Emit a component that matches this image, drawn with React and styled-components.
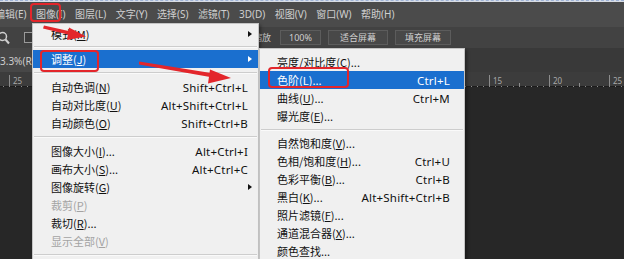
import React from 'react';
import styled, { createGlobalStyle, css } from 'styled-components';

const GlobalStyle = createGlobalStyle`
  html, body {
    margin: 0;
    padding: 0;
    background: #262626;
    overflow: hidden;
  }
`;

const Screen = styled.div`
  position: relative;
  width: 624px;
  height: 259px;
  overflow: hidden;
  display: flex;
  flex-direction: column;
  background: #262626;
  font-family: "Noto Sans", "Noto Sans CJK SC", sans-serif;
`;

const TopEdge = styled.div`
  height: 1px;
  border-top: 1px dashed #9fb3d6;
  background: #d8dde6;
`;

const MenuBar = styled.div`
  height: 25px;
  display: flex;
  align-items: center;
  gap: 9.5px;
  margin-left: -5px;
  background: #4b4b4b;
  color: #cfcfcf;
  font-size: 10px;
  white-space: nowrap;
`;

const BarItem = styled.span`
  position: relative;
  line-height: 25px;

  ${(p) =>
    p.$marked &&
    css`
      &::after {
        content: '';
        position: absolute;
        left: -6px;
        top: 1px;
        width: 27px;
        height: 15px;
        border: 2px solid #e3262b;
        border-radius: 4px;
      }
    `}
`;

const OptionsBar = styled.div`
  height: 21px;
  display: flex;
  align-items: center;
  background: #424242;
  color: #c6c6c6;
  font-size: 9px;
  white-space: nowrap;
`;

const ToolIcons = styled.div`
  display: flex;
  align-items: center;
  gap: 14px;
  margin-left: -2px;
`;

const CheckBox = styled.span`
  width: 7px;
  height: 9px;
  border: 1px solid #9a9a9a;
  background: #3a3a3a;
`;

const OptionGroup = styled.div`
  display: flex;
  align-items: center;
  gap: 7px;
  margin-left: 202px;
`;

const OptionLabel = styled.span`
  margin-right: 2px;
`;

const OptionButton = styled.span`
  height: 13px;
  line-height: 13px;
  padding: 0 ${(p) => p.$pad || 9}px;
  border: 1px solid #5c5c5c;
  background: #484848;
  color: #cfcfcf;
`;

const TabRow = styled.div`
  height: 24px;
  display: flex;
  align-items: stretch;
  background: #393939;
`;

const DocTab = styled.div`
  display: flex;
  align-items: center;
  padding: 2px 10px 0 0;
  background: #474747;
  color: #cdcdcd;
  font-size: 10px;
`;

const RulerStrip = styled.div`
  height: 14px;
  background: #3c3c3c;
  border-bottom: 1px solid #1d1d1d;
`;

const Canvas = styled.div`
  flex: 1;
  background: #272727;
`;

const Menu = styled.div`
  position: absolute;
  left: ${(p) => p.$left}px;
  top: ${(p) => p.$top}px;
  width: ${(p) => p.$width}px;
  padding-top: ${(p) => p.$pad}px;
  background: #f0f0f0;
  border: 1px solid #c4c4c4;
  box-shadow: 2px 2px 3px rgba(0, 0, 0, 0.35);
  box-sizing: border-box;
  color: #111;
  font-size: 11px;
`;

const Item = styled.div`
  height: 18px;
  display: flex;
  align-items: center;
  padding: 0 ${(p) => p.$padRight}px 0 ${(p) => p.$padLeft}px;
  white-space: nowrap;
  color: ${(p) => (p.$disabled ? '#a3a3a3' : p.$active ? '#fff' : '#111')};
  background: ${(p) => (p.$active ? '#1a6fcf' : 'transparent')};
`;

const Label = styled.span`
  position: relative;
  flex: 1;
  font-family: "Noto Sans CJK SC", "Noto Sans", sans-serif;

  ${(p) =>
    p.$box &&
    css`
      flex: none;
      &::after {
        content: '';
        position: absolute;
        left: ${p.$box[0]}px;
        top: ${p.$box[1]}px;
        right: ${p.$box[2]}px;
        bottom: ${p.$box[3]}px;
        border: 2px solid #e3262b;
        border-radius: 4px;
      }
    `}
`;

const Grow = styled.span`
  flex: 1;
`;

const Shortcut = styled.span`
  font-size: 11.5px;
  letter-spacing: 0.2px;
`;

const SubArrow = styled.span`
  width: 0;
  height: 0;
  margin-right: -4px;
  border-left: 4px solid ${(p) => (p.$active ? '#fff' : '#111')};
  border-top: 3.5px solid transparent;
  border-bottom: 3.5px solid transparent;
`;

const Separator = styled.div`
  height: ${(p) => p.$h}px;
  display: flex;
  align-items: center;
  padding: 0 1px;

  &::before {
    content: '';
    flex: 1;
    border-top: 1px solid #cdcdcd;
    border-bottom: 1px solid #fafafa;
  }
`;

const Annotations = styled.svg`
  position: absolute;
  left: 0;
  top: 0;
  pointer-events: none;
`;

const barItems = [
  ['编辑', 'E'],
  ['图像', 'I', true],
  ['图层', 'L'],
  ['文字', 'Y'],
  ['选择', 'S'],
  ['滤镜', 'T'],
  ['3D', 'D'],
  ['视图', 'V'],
  ['窗口', 'W'],
  ['帮助', 'H'],
];

const imageMenu = [
  { label: '模式', k: 'M', sub: true },
  { sep: 7 },
  { label: '调整', k: 'J', sub: true, active: true, box: [-11, -1, -13, -5] },
  { sep: 10 },
  { label: '自动色调', k: 'N', sc: 'Shift+Ctrl+L' },
  { label: '自动对比度', k: 'U', sc: 'Alt+Shift+Ctrl+L' },
  { label: '自动颜色', k: 'O', sc: 'Shift+Ctrl+B' },
  { sep: 10 },
  { label: '图像大小', k: 'I', dots: true, sc: 'Alt+Ctrl+I' },
  { label: '画布大小', k: 'S', dots: true, sc: 'Alt+Ctrl+C' },
  { label: '图像旋转', k: 'G', sub: true },
  { label: '裁剪', k: 'P', disabled: true },
  { label: '裁切', k: 'R', dots: true },
  { label: '显示全部', k: 'V', disabled: true },
  { sep: 10 },
  { label: '复制', k: 'D', dots: true },
];

const adjustMenu = [
  { label: '亮度/对比度', k: 'C', dots: true },
  { label: '色阶', k: 'L', dots: true, sc: 'Ctrl+L', active: true, box: [-9, -5, -27, 0] },
  { label: '曲线', k: 'U', dots: true, sc: 'Ctrl+M' },
  { label: '曝光度', k: 'E', dots: true },
  { sep: 9 },
  { label: '自然饱和度', k: 'V', dots: true },
  { label: '色相/饱和度', k: 'H', dots: true, sc: 'Ctrl+U' },
  { label: '色彩平衡', k: 'B', dots: true, sc: 'Ctrl+B' },
  { label: '黑白', k: 'K', dots: true, sc: 'Alt+Shift+Ctrl+B' },
  { label: '照片滤镜', k: 'F', dots: true },
  { label: '通道混合器', k: 'X', dots: true },
  { label: '颜色查找', dots: true },
];

function MenuList({ items, padLeft, padRight }) {
  return items.map((it, i) => {
    if (it.sep) return <Separator key={i} $h={it.sep} />;
    const text = (
      <>
        {it.label}
        {it.k && (
          <>
            (<u>{it.k}</u>)
          </>
        )}
        {it.dots && '...'}
      </>
    );
    return (
      <Item
        key={i}
        $active={it.active}
        $disabled={it.disabled}
        $padLeft={padLeft}
        $padRight={padRight}
      >
        <Label $box={it.box}>{text}</Label>
        {it.box && <Grow />}
        {it.sc && <Shortcut>{it.sc}</Shortcut>}
        {it.sub && <SubArrow $active={it.active} />}
      </Item>
    );
  });
}

function Ruler() {
  const ticks = [];
  for (let x = 3; x < 624; x += 6) {
    const step = Math.round((x - 9) / 6);
    const major = step % 10 === 0;
    const half = step % 5 === 0;
    const len = major ? 14 : half ? 6 : 3;
    ticks.push(
      <line key={x} x1={x + 0.5} x2={x + 0.5} y1={14 - len} y2={14} stroke="#8c8c8c" strokeWidth="1" />
    );
    if (major) {
      ticks.push(
        <text key={'t' + x} x={x + 4} y={9} fontSize="8" fill="#a8a8a8" fontFamily="Noto Sans, sans-serif">
          {Math.abs((x - 9) / 12 - 25)}
        </text>
      );
    }
  }
  return (
    <svg width="624" height="14">
      {ticks}
    </svg>
  );
}

function App() {
  return (
    <>
      <GlobalStyle />
      <Screen>
        <TopEdge />
        <MenuBar>
          {barItems.map(([t, k, marked]) => (
            <BarItem key={t} $marked={marked}>
              {t}({k})
            </BarItem>
          ))}
        </MenuBar>
        <OptionsBar>
          <ToolIcons>
            <svg width="12" height="14" viewBox="0 0 12 14">
              <circle cx="4.5" cy="5.5" r="4" fill="none" stroke="#cfcfcf" strokeWidth="1.5" />
              <line x1="7.5" y1="8.5" x2="11" y2="12.5" stroke="#cfcfcf" strokeWidth="2" />
            </svg>
            <CheckBox />
          </ToolIcons>
          <OptionGroup>
            <OptionLabel>细微缩放</OptionLabel>
            <OptionButton $pad={8}>100%</OptionButton>
            <OptionButton $pad={11}>适合屏幕</OptionButton>
            <OptionButton $pad={9}>填充屏幕</OptionButton>
          </OptionGroup>
        </OptionsBar>
        <TabRow>
          <DocTab>3.3%(RGB/8#)</DocTab>
        </TabRow>
        <RulerStrip>
          <Ruler />
        </RulerStrip>
        <Canvas />

        <Menu $left={32} $top={23} $width={227} $pad={1}>
          <MenuList items={imageMenu} padLeft={18} padRight={10} />
        </Menu>
        <Menu $left={259} $top={48} $width={206} $pad={4}>
          <MenuList items={adjustMenu} padLeft={17} padRight={14} />
        </Menu>

        <Annotations width="624" height="259">
          <path d="M44 25.5 L73 32 L72 35.5 L43 28.5 Z" fill="#e3262b" />
          <path d="M69 27.5 L86 36.5 L67 40 Z" fill="#e3262b" />
          <path d="M139 61.5 L214 73.5 L213 77.5 L139 64.5 Z" fill="#e3262b" />
          <path d="M210 69.5 L231 78 L208 83.5 Z" fill="#e3262b" />
        </Annotations>
      </Screen>
    </>
  );
}

export default App;
